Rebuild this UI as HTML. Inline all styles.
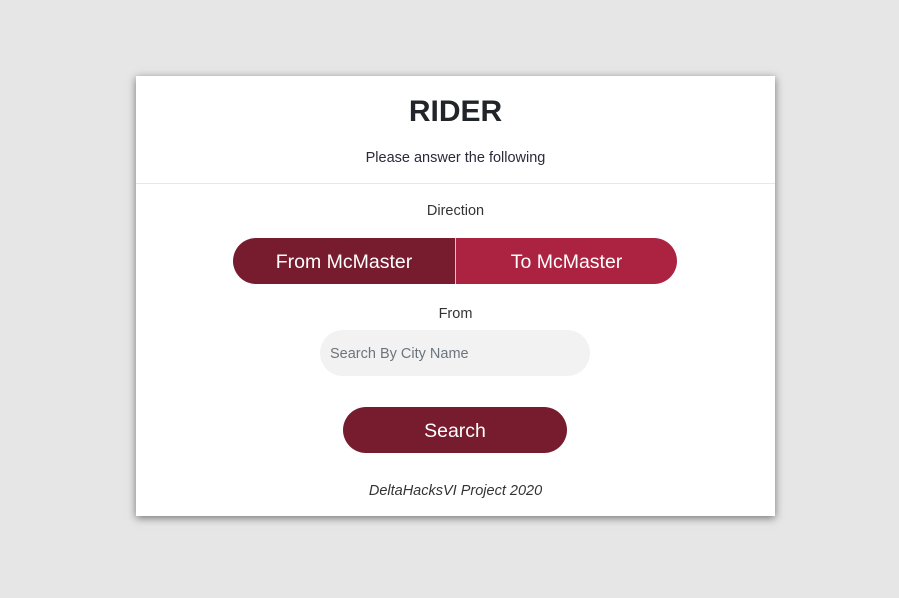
<!DOCTYPE html>
<html><head><style>
body{margin:0;width:899px;height:598px;background:#e6e6e6;font-family:"Liberation Sans",sans-serif;position:relative;overflow:hidden}
.card{position:absolute;left:136px;top:76px;width:639px;height:440px;background:#fff;box-shadow:0 2px 8px rgba(0,0,0,.5)}
.t{position:absolute;width:100%;text-align:center;color:#222}
.a{position:absolute;display:flex;align-items:center;justify-content:center;color:#fff;font-size:19.5px;padding-top:3px;box-sizing:border-box}
</style></head><body>
<div class="card">
<div class="t" style="top:19px;font-size:30px;font-weight:bold;color:#212529">RIDER</div>
<div class="t" style="top:74px;font-size:14.5px;color:#2a2a3a">Please answer the following</div>
<div style="position:absolute;left:0;right:0;top:107px;height:1px;background:#e8e8e8"></div>
<div class="t" style="top:127px;font-size:14.5px;color:#333">Direction</div>
<div class="a" style="left:97px;top:162px;width:222px;height:46px;background:#771c2e;border-radius:23px 0 0 23px">From McMaster</div>
<div style="position:absolute;left:319px;top:162px;width:1px;height:46px;background:#e8c0c8"></div>
<div class="a" style="left:320px;top:162px;width:221px;height:46px;background:#ab2340;border-radius:0 23px 23px 0">To McMaster</div>
<div class="t" style="top:230px;font-size:14.5px;color:#333">From</div>
<div style="position:absolute;left:184px;top:254px;width:270px;height:46px;background:#f2f2f2;border-radius:23px;font-size:14.5px;color:#6c757d;line-height:48px;padding-left:10px;box-sizing:border-box">Search By City Name</div>
<div class="a" style="left:207px;top:331px;width:224px;height:46px;background:#771c2e;border-radius:23px">Search</div>
<div class="t" style="top:407px;font-size:14.5px;font-style:italic;color:#333">DeltaHacksVI Project 2020</div>
</div>
</body></html>
